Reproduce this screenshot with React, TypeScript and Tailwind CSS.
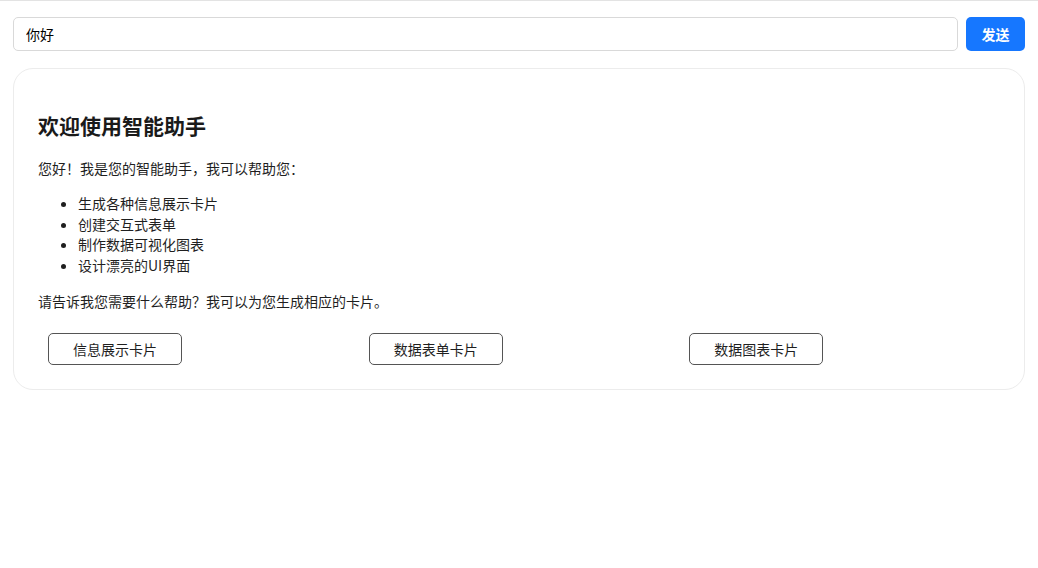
import { useState } from 'react';

const features = ['生成各种信息展示卡片', '创建交互式表单', '制作数据可视化图表', '设计漂亮的UI界面'];
const quickActions = ['信息展示卡片', '数据表单卡片', '数据图表卡片'];

export default function App() {
  const [input, setInput] = useState('你好');

  return (
    <div
      className="min-h-[568px] bg-white border-t border-[#e3e3e3] text-[#1f1f1f]"
      style={{ fontFamily: '"Noto Sans CJK SC", "Noto Sans", sans-serif' }}
    >
      <div className="px-[13px] pt-4">
        {/* Input bar */}
        <div className="flex items-center gap-2">
          <input
            value={input}
            onChange={(e) => setInput(e.target.value)}
            className="flex-1 h-[34px] rounded-[5px] border border-[#d9d9d9] px-3 text-sm text-black outline-none"
          />
          <button className="h-[34px] w-[59px] rounded-[5px] bg-[#1677ff] text-sm font-semibold text-white">
            发送
          </button>
        </div>

        {/* Welcome card */}
        <div className="mt-[17px] rounded-[20px] border border-[#ececec] px-6 pt-6 pb-6">
          <h3 className="mt-[18px] text-[21px] leading-[28px] font-bold text-[#1a1a1a]">欢迎使用智能助手</h3>
          <p className="mt-[19px] text-sm leading-[21px]">您好！我是您的智能助手，我可以帮助您：</p>
          <ul className="mt-[14px] list-disc pl-10 text-sm leading-[20.7px]">
            {features.map((f) => (
              <li key={f}>{f}</li>
            ))}
          </ul>
          <p className="mt-[15px] text-sm leading-[21px]">请告诉我您需要什么帮助？我可以为您生成相应的卡片。</p>
          <div className="mt-[21px] grid grid-cols-3">
            {quickActions.map((a) => (
              <div key={a} className="px-[10px]">
                <button className="h-[32px] w-[134px] rounded-[5px] border border-[#555] bg-white text-sm text-[#1f1f1f]">
                  {a}
                </button>
              </div>
            ))}
          </div>
        </div>
      </div>
    </div>
  );
}
